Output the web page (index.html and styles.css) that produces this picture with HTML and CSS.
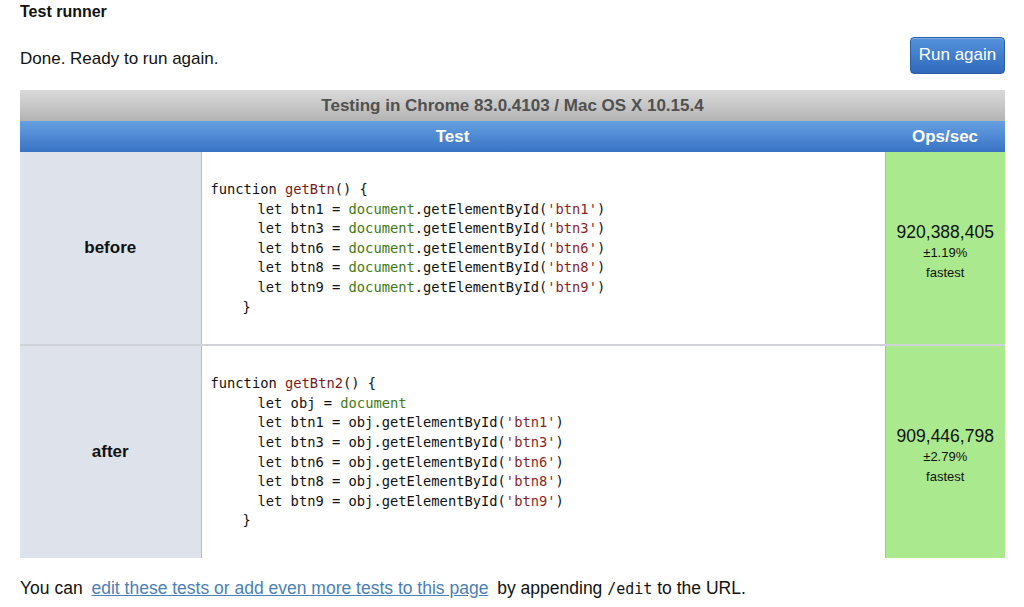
FILE: index.html
```html
<!DOCTYPE html>
<html>
<head>
<meta charset="utf-8">
<title>Test runner</title>
<link rel="stylesheet" href="styles.css">
</head>
<body>
<div class="page">
  <h1 class="title">Test runner</h1>
  <div class="status-bar">
    <p class="status">Done. Ready to run again.</p>
    <button class="run-btn">Run again</button>
  </div>
  <table class="results">
    <colgroup><col class="c-label"><col class="c-code"><col class="c-ops"></colgroup>
    <thead>
      <tr class="env-row"><th colspan="3">Testing in Chrome 83.0.4103 / Mac OS X 10.15.4</th></tr>
      <tr class="head-row"><th colspan="2">Test</th><th>Ops/sec</th></tr>
    </thead>
    <tbody>
      <tr class="row">
        <th class="label">before</th>
        <td class="code"><div class="ln">function <span class="fn">getBtn</span>() {</div><div class="ln in">let btn1 = <span class="gl">document</span>.getElementById(<span class="str">'btn1'</span>)</div><div class="ln in">let btn3 = <span class="gl">document</span>.getElementById(<span class="str">'btn3'</span>)</div><div class="ln in">let btn6 = <span class="gl">document</span>.getElementById(<span class="str">'btn6'</span>)</div><div class="ln in">let btn8 = <span class="gl">document</span>.getElementById(<span class="str">'btn8'</span>)</div><div class="ln in">let btn9 = <span class="gl">document</span>.getElementById(<span class="str">'btn9'</span>)</div><div class="ln close">}</div></td>
        <td class="ops"><div class="num">920,388,405</div><div class="small">±1.19%</div><div class="small">fastest</div></td>
      </tr>
      <tr class="row">
        <th class="label">after</th>
        <td class="code"><div class="ln">function <span class="fn">getBtn2</span>() {</div><div class="ln in">let obj = <span class="gl">document</span></div><div class="ln in">let btn1 = obj.getElementById(<span class="str">'btn1'</span>)</div><div class="ln in">let btn3 = obj.getElementById(<span class="str">'btn3'</span>)</div><div class="ln in">let btn6 = obj.getElementById(<span class="str">'btn6'</span>)</div><div class="ln in">let btn8 = obj.getElementById(<span class="str">'btn8'</span>)</div><div class="ln in">let btn9 = obj.getElementById(<span class="str">'btn9'</span>)</div><div class="ln close">}</div></td>
        <td class="ops"><div class="num">909,446,798</div><div class="small">±2.79%</div><div class="small">fastest</div></td>
      </tr>
    </tbody>
  </table>
  <p class="footer">You can <a href="#" class="edit-link">edit these tests or add even more tests to this page</a> by appending <code class="inline">/edit</code> to the URL.</p>
</div>
</body>
</html>
```

FILE: styles.css
```css
html, body {
  margin: 0;
  padding: 0;
  background: #fff;
}
body {
  font-family: "Liberation Sans", Arial, sans-serif;
  color: #111;
}
.page {
  padding: 0 19px 0 20px;
}
.title {
  margin: 0;
  padding-top: 3px;
  font-size: 16px;
  line-height: 18px;
  font-weight: bold;
}
.status-bar {
  display: flex;
  justify-content: space-between;
  align-items: center;
  margin-top: 16px;
  height: 36px;
}
.status {
  margin: 7px 0 0 0;
  font-size: 17px;
}
.run-btn {
  height: 37px;
  width: 95px;
  padding: 0;
  border: 1px solid #2c5ea6;
  border-radius: 4px;
  background: linear-gradient(#5592dc, #2f69bd);
  color: #fff;
  font-family: "Liberation Sans", Arial, sans-serif;
  font-size: 17px;
  box-shadow: inset 0 1px 0 rgba(255,255,255,0.25);
}
.results {
  margin-top: 17px;
  width: 100%;
  border-collapse: collapse;
  table-layout: fixed;
}
.c-label { width: 181px; }
.c-ops { width: 120px; }
.env-row th {
  height: 31px;
  padding: 0;
  background: linear-gradient(#dadada, #b3b3b3);
  color: #505050;
  font-size: 17px;
  font-weight: bold;
}
.head-row th {
  height: 31px;
  padding: 0;
  background: linear-gradient(#66a0e2, #3873c4);
  color: #fff;
  font-size: 17px;
  font-weight: bold;
}
.row + .row td,
.row + .row th {
  border-top: 2px solid #cfd2d6;
}
.label {
  background: #dee3eb;
  border-right: 1px solid #b9bcc0;
  font-size: 17px;
  font-weight: bold;
  color: #111;
}
.code {
  padding: 28px 10px 27px 9px;
  vertical-align: middle;
  font-family: "DejaVu Sans Mono", monospace;
  font-size: 13.75px;
  line-height: 19.6px;
  color: #111;
  white-space: pre;
}
.ln.in { padding-left: 47px; }
.ln.close { padding-left: 32px; }
.fn { color: #7c1818; }
.gl { color: #3f7a17; }
.str { color: #8b1f1f; }
.ops {
  background: #abe98f;
  border-left: 1px solid #96d17c;
  text-align: center;
  vertical-align: middle;
  color: #111;
  padding-top: 8px;
}
.num {
  font-size: 17.5px;
  line-height: 22px;
}
.small {
  font-size: 13px;
  line-height: 20px;
}
.footer {
  margin: 20px 0 0 0;
  font-size: 17.5px;
}
.edit-link {
  color: #4a7fb5;
  text-decoration: underline;
  margin: 0 4px;
}
.inline {
  font-family: "DejaVu Sans Mono", monospace;
  font-size: 15px;
}
```
